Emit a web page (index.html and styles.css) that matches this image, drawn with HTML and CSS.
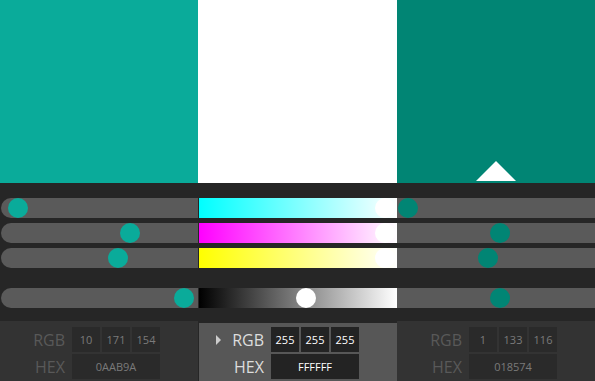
FILE: index.html
```html
<!DOCTYPE html>
<html lang="en">
<head>
  <meta charset="UTF-8">
  <title>Colour Mixer</title>
  <link rel="stylesheet" href="styles.css">
</head>
<body>
  <div class="swatches">
    <div class="swatch left"></div>
    <div class="swatch middle"></div>
    <div class="swatch right">
      <div class="pointer"></div>
    </div>
  </div>

  <div class="sliders">
    <div class="row">
      <div class="track first"><span class="thumb teal" style="left: 7px"></span></div>
      <div class="track grad cyan"><span class="thumb white" style="left: 176px"></span></div>
      <div class="track last"><span class="thumb dark" style="left: 1px"></span></div>
    </div>
    <div class="row">
      <div class="track first"><span class="thumb teal" style="left: 119px"></span></div>
      <div class="track grad magenta"><span class="thumb white" style="left: 176px"></span></div>
      <div class="track last"><span class="thumb dark" style="left: 93px"></span></div>
    </div>
    <div class="row">
      <div class="track first"><span class="thumb teal" style="left: 107px"></span></div>
      <div class="track grad yellow"><span class="thumb white" style="left: 176px"></span></div>
      <div class="track last"><span class="thumb dark" style="left: 81px"></span></div>
    </div>
    <div class="row gap">
      <div class="track first"><span class="thumb teal" style="left: 173px"></span></div>
      <div class="track grad gray"><span class="thumb white" style="left: 97px"></span></div>
      <div class="track last"><span class="thumb dark" style="left: 93px"></span></div>
    </div>
  </div>

  <div class="panels">
    <div class="panel">
      <div class="label">RGB</div>
      <div class="box">10</div>
      <div class="box">171</div>
      <div class="box">154</div>
      <div class="label">HEX</div>
      <div class="box wide">0AAB9A</div>
    </div>
    <div class="panel active">
      <div class="label"><span class="marker"></span>RGB</div>
      <div class="box">255</div>
      <div class="box">255</div>
      <div class="box">255</div>
      <div class="label">HEX</div>
      <div class="box wide">FFFFFF</div>
    </div>
    <div class="panel">
      <div class="label">RGB</div>
      <div class="box">1</div>
      <div class="box">133</div>
      <div class="box">116</div>
      <div class="label">HEX</div>
      <div class="box wide">018574</div>
    </div>
  </div>
</body>
</html>
```

FILE: styles.css
```css
body {
  margin: 0;
  background-color: #262626;
  font-family: "Open Sans", Arial, sans-serif;
  overflow: hidden;
}

.swatches {
  display: grid;
  grid-template-columns: 198px 199px 198px;
  height: 183px;
}

.swatch.left {
  background: #0aab9a;
}

.swatch.middle {
  background: #ffffff;
}

.swatch.right {
  background: #018574;
  position: relative;
}

.pointer {
  position: absolute;
  left: 79px;
  bottom: 2px;
  width: 0;
  height: 0;
  border-left: 20px solid transparent;
  border-right: 20px solid transparent;
  border-bottom: 20px solid #ffffff;
}

.sliders {
  padding-top: 15px;
  display: flex;
  flex-direction: column;
  gap: 5px;
}

.row {
  display: grid;
  grid-template-columns: 198px 199px 198px;
  height: 20px;
}

.row.gap {
  margin-top: 15px;
}

.track {
  position: relative;
  background: #5a5a5a;
}

.track.first {
  margin-left: 1px;
  border-radius: 10px 0 0 10px;
}

.track.grad {
  margin-left: 1px;
}

.cyan {
  background: linear-gradient(to right, #00ffff, #ffffff);
}

.magenta {
  background: linear-gradient(to right, #ff00ff, #ffffff);
}

.yellow {
  background: linear-gradient(to right, #ffff00, #ffffff);
}

.gray {
  background: linear-gradient(to right, #000000, #ffffff);
}

.thumb {
  position: absolute;
  top: 0;
  width: 20px;
  height: 20px;
  border-radius: 50%;
}

.thumb.teal {
  background: #0aab9a;
}

.thumb.white {
  background: #ffffff;
}

.thumb.dark {
  background: #018574;
}

.panels {
  display: grid;
  grid-template-columns: 198px 199px 198px;
  margin-top: 13px;
  height: 60px;
}

.panel {
  background: #333333;
  display: grid;
  grid-template-columns: 70px 28px 28px 28px;
  grid-template-rows: 25px 25px;
  column-gap: 2px;
  row-gap: 2px;
  padding-top: 6px;
  align-content: start;
}

.panel.active {
  background: #575757;
  margin-left: 1px;
  margin-top: 2px;
  padding-top: 4px;
}

.label {
  display: flex;
  align-items: center;
  justify-content: flex-end;
  padding-right: 5px;
  font-size: 16px;
  color: #595959;
}

.active .label {
  color: #dddddd;
}

.marker {
  width: 0;
  height: 0;
  border-top: 5px solid transparent;
  border-bottom: 5px solid transparent;
  border-left: 5px solid #cccccc;
  margin-right: 11px;
}

.box {
  background: #2a2a2a;
  color: #7a7a7a;
  font-size: 11px;
  display: flex;
  align-items: center;
  justify-content: center;
}

.active .box {
  background: #232323;
  color: #ffffff;
}

.box.wide {
  grid-column: span 3;
}
```
